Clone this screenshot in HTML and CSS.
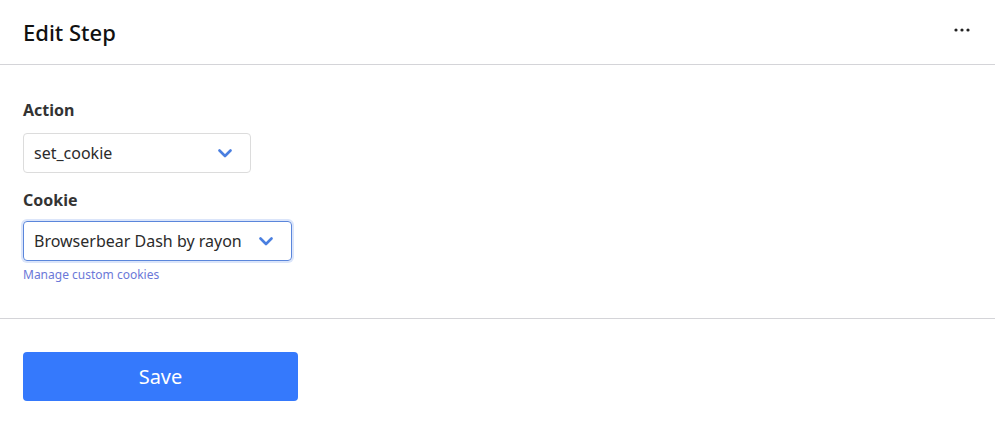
FILE: index.html
```html
<!DOCTYPE html>
<html lang="en">
<head>
  <meta charset="UTF-8">
  <meta name="viewport" content="width=device-width, initial-scale=1.0">
  <link rel="stylesheet" href="styles.css">
  <title>Edit Step</title>
</head>
<body>
  <div class="header">
    <h1>Edit Step</h1>
    <button class="more" aria-label="More">
      <svg width="16" height="4" viewBox="0 0 16 4"><circle cx="2" cy="2" r="1.6"/><circle cx="8" cy="2" r="1.6"/><circle cx="14" cy="2" r="1.6"/></svg>
    </button>
  </div>

  <div class="form">
    <label class="label">Action</label>
    <div class="select action">
      <span>set_cookie</span>
      <svg class="chev" width="14" height="9" viewBox="0 0 14 9"><path d="M1.5 1.5 L7 7 L12.5 1.5"/></svg>
    </div>

    <label class="label tight">Cookie</label>
    <div class="select cookie focused">
      <span>Browserbear Dash by rayon</span>
      <svg class="chev" width="14" height="9" viewBox="0 0 14 9"><path d="M1.5 1.5 L7 7 L12.5 1.5"/></svg>
    </div>
    <a class="hint" href="#">Manage custom cookies</a>
  </div>

  <div class="footer">
    <button class="save">Save</button>
  </div>
</body>
</html>
```

FILE: styles.css
```css
body {
  margin: 0;
  font-family: "Noto Sans", "Open Sans", sans-serif;
  color: #2b2b2b;
  background: #fff;
}
.header {
  height: 64px;
  border-bottom: 1px solid #d4d4d8;
  display: flex;
  align-items: center;
  justify-content: space-between;
  padding: 0 23px;
}
.header h1 {
  margin: 0;
  font-size: 22px;
  font-weight: 500;
  color: #111;
}
.more {
  border: none;
  background: none;
  padding: 0;
  margin-right: 2px;
  display: flex;
  fill: #222;
  margin-top: -4px;
}
.form {
  padding: 34px 23px 35px;
  display: flex;
  flex-direction: column;
  align-items: flex-start;
  border-bottom: 1px solid #d4d4d8;
}
.label {
  font-weight: 700;
  font-size: 16px;
  line-height: 22px;
  color: #333;
  margin-bottom: 12px;
}
.label.tight {
  margin-bottom: 10px;
}
.select {
  box-sizing: border-box;
  height: 40px;
  border: 1px solid #dcdcdc;
  border-radius: 4px;
  display: flex;
  align-items: center;
  justify-content: space-between;
  padding: 0 18px 0 10px;
  font-size: 16px;
  color: #2b2b2b;
  margin-bottom: 16px;
}
.action {
  width: 228px;
}
.cookie {
  width: 269px;
  margin-bottom: 5px;
}
.focused {
  border-color: #5b86db;
  box-shadow: 0 0 0 2px #dbe5fa;
}
.chev {
  fill: none;
  stroke: #4a7fe0;
  stroke-width: 2.6;
  stroke-linecap: round;
  stroke-linejoin: round;
}
.hint {
  font-size: 12px;
  color: #6b78d8;
  text-decoration: none;
}
.footer {
  padding: 33px 23px;
}
.save {
  width: 275px;
  height: 49px;
  border: none;
  border-radius: 4px;
  background: #3579fc;
  color: #fff;
  font-family: inherit;
  font-size: 20px;
  cursor: pointer;
}
```
